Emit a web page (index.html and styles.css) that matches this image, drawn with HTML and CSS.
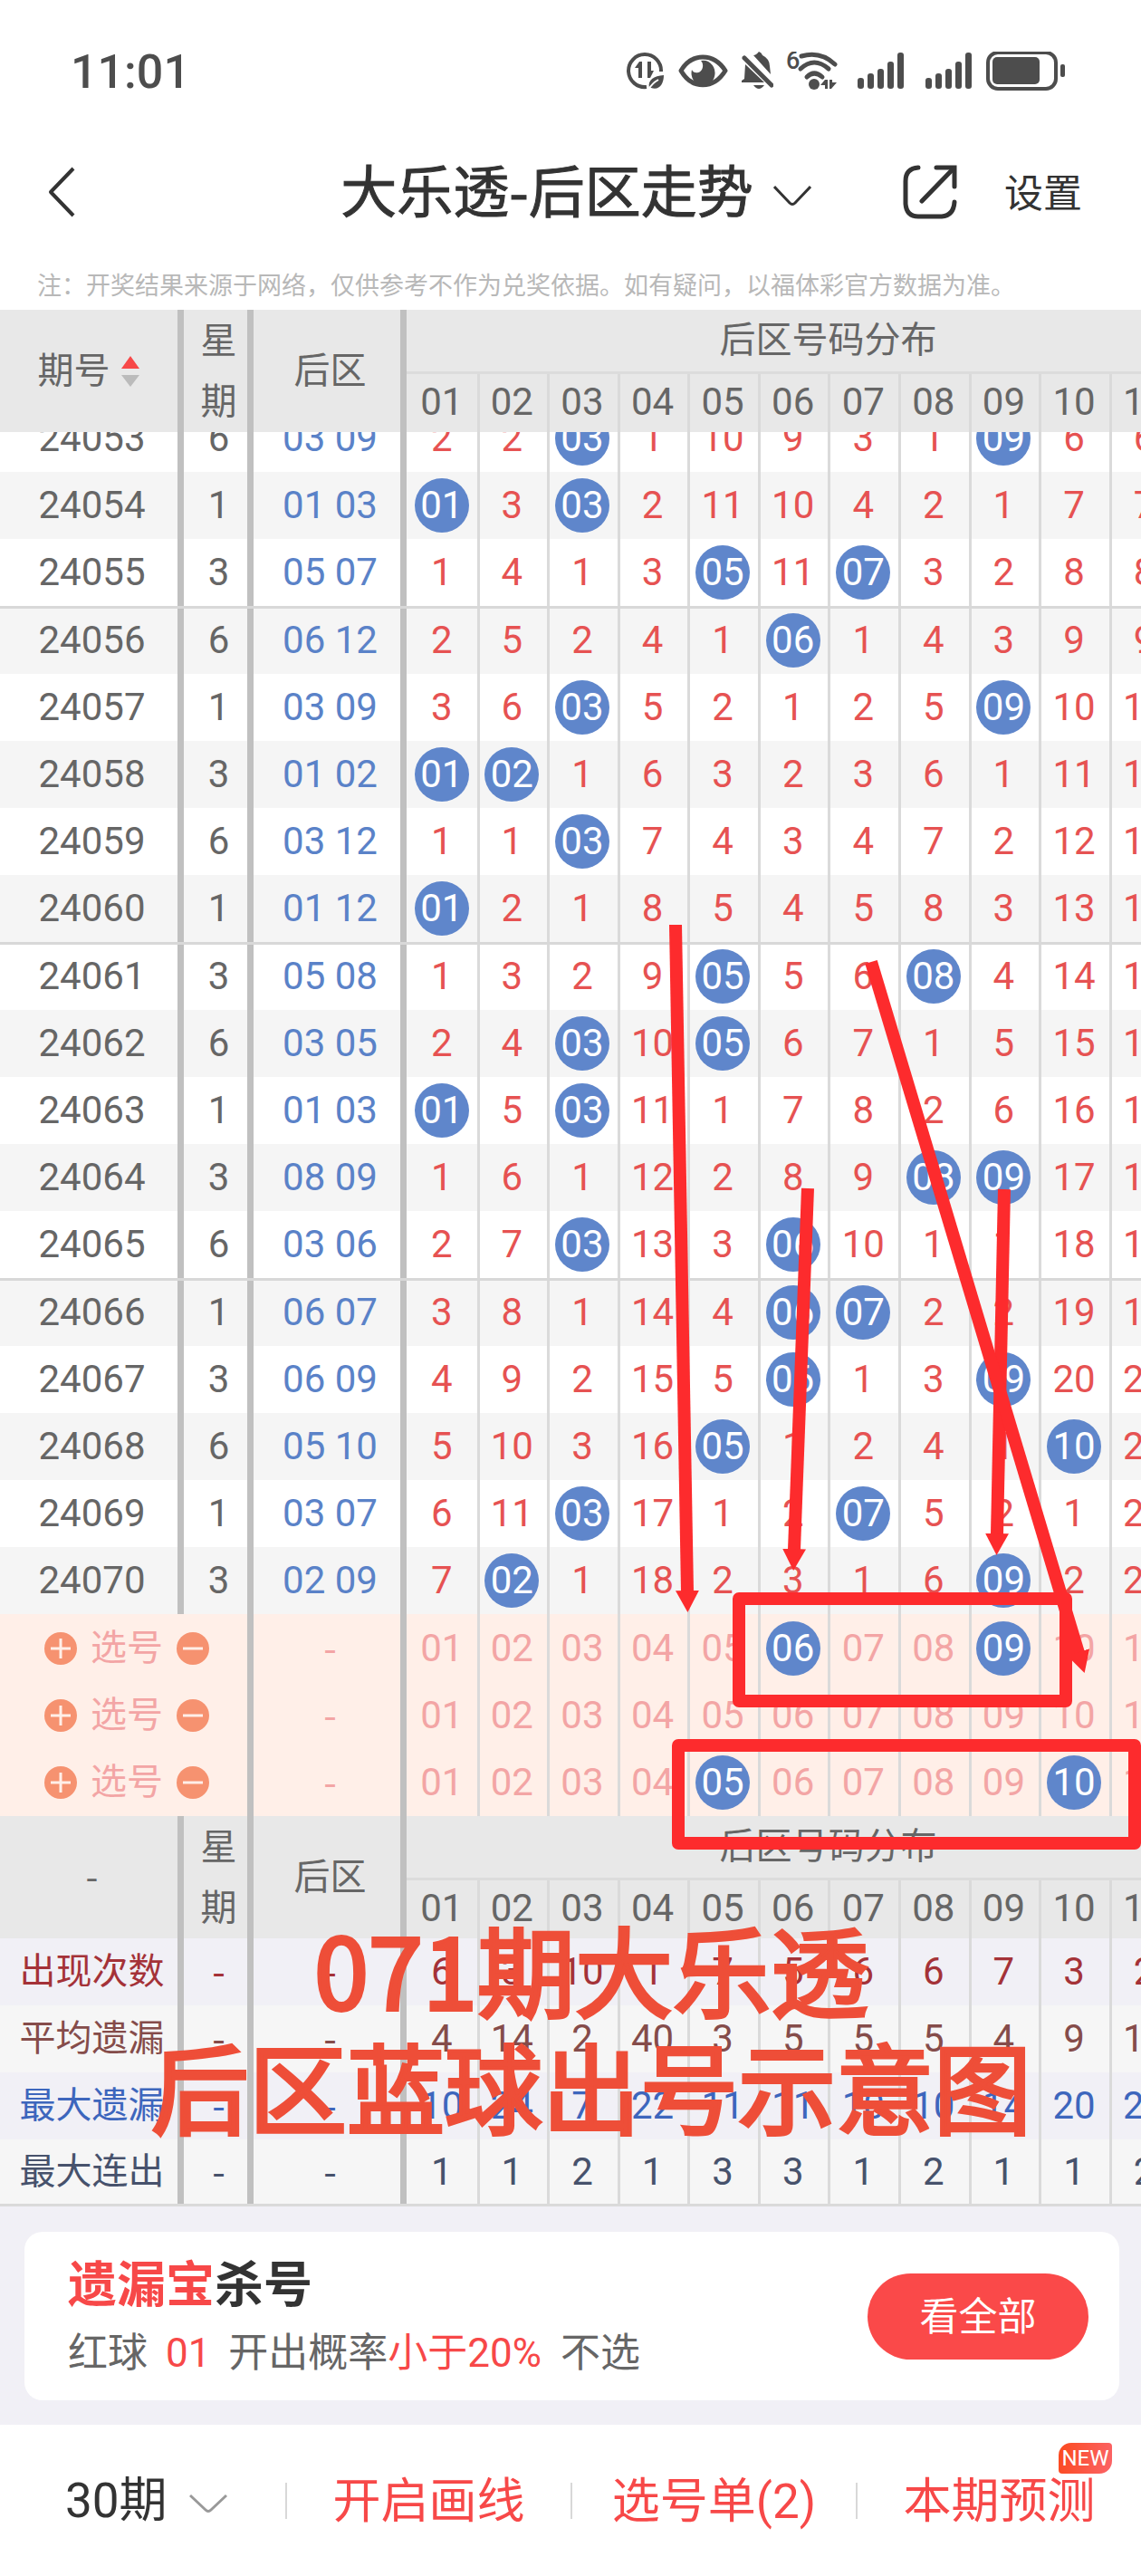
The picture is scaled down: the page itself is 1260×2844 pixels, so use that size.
FILE: index.html
```html
<!DOCTYPE html>
<html lang="zh-CN">

<head>
    <meta charset="UTF-8">
    <meta name="viewport" content="width=device-width, initial-scale=1.0">
    <title>大乐透-后区走势</title>
    <link rel="stylesheet" href="styles.css">
</head>

<body>
    <!-- Status bar -->
    <div class="status-bar">
        <div class="clock">11:01</div>
        <div class="status-icons">
            <svg width="43" height="44" viewBox="0 0 43 44" fill="none" stroke="#4d4d4d" stroke-width="4">
                <path d="M22 39 A18 18 0 1 1 38 22" />
                <path d="M9 18 L14 11 H17 V29 H13 V18 Z M23 11 H27 V21 H30 L26 29 H23 Z" fill="#4d4d4d" stroke="none" />
                <path d="M25 40 C23 31 30 27 41 26 C41 36 36 43 27 40 Z" fill="#4d4d4d" stroke="none" />
                <path d="M24 42 Q28 35 35 31" stroke="#fff" stroke-width="2" />
            </svg>
            <svg width="56" height="44" viewBox="0 0 56 44">
                <path d="M3 21 C15 1 39 1 52 21 C39 42 15 42 3 21 Z" fill="none" stroke="#4d4d4d" stroke-width="5" stroke-linejoin="round" />
                <path d="M15 20 A13 14 0 1 0 25 10 C29 14 27 22 22 23 Q17 24 15 20 Z" fill="#4d4d4d" />
            </svg>
            <svg width="35" height="44" viewBox="0 0 35 44">
                <path d="M13 4 Q16 4 19 0 Q22 1 23 4 Q31 8 31 16 L32 25 Z M4 14 L25 34 H0 V32 L3 30 Z" fill="#4d4d4d" />
                <path d="M3 7 L33 37" stroke="#4d4d4d" stroke-width="5" stroke-linecap="round" />
                <path d="M13 37 H25 Q19 45 13 37 Z" fill="#4d4d4d" />
            </svg>
            <svg width="65" height="44" viewBox="0 0 65 44" fill="none" stroke="#4d4d4d" stroke-width="5" stroke-linecap="round">
                <text x="0" y="19" class="wifi-gen">6</text>
                <path d="M17 5 Q38 -1 54 14" />
                <path d="M16 19 Q31 5 47 19" />
                <path d="M23 28 Q31 20 40 28" />
                <circle cx="31" cy="36" r="6" fill="#4d4d4d" stroke="none" />
                <path d="M38 37 L43 31 H46 V41 H43 V37 Z M48 31 H51 V34 H56 L50 41 H48 Z" fill="#4d4d4d" stroke="none" />
            </svg>
            <svg width="61" height="44" viewBox="0 0 61 44" fill="#4d4d4d">
                <rect x="0" y="29" width="7" height="12" rx="3" />
                <rect x="11" y="24" width="7" height="17" rx="3" />
                <rect x="22" y="19" width="7" height="22" rx="3" />
                <rect x="33" y="11" width="7" height="30" rx="3" />
                <rect x="44" y="1" width="7" height="40" rx="3" />
            </svg>
            <svg width="53" height="44" viewBox="0 0 53 44" fill="#4d4d4d">
                <rect x="0" y="29" width="7" height="12" rx="3" />
                <rect x="11" y="24" width="7" height="17" rx="3" />
                <rect x="22" y="19" width="7" height="22" rx="3" />
                <rect x="33" y="11" width="7" height="30" rx="3" />
                <rect x="44" y="1" width="7" height="40" rx="3" />
            </svg>
            <svg width="87" height="44" viewBox="0 0 87 44" fill="#4d4d4d">
                <rect x="2" y="1" width="75" height="40" rx="11" fill="none" stroke="#4d4d4d" stroke-width="4" />
                <rect x="7" y="6" width="52" height="30" rx="5" />
                <rect x="82" y="14" width="5" height="14" rx="2" />
            </svg>
        </div>
    </div>

    <!-- Navigation -->
    <header class="nav">
        <button class="back" aria-label="返回">
            <svg width="30" height="56" viewBox="0 0 30 56" fill="none" stroke="#333" stroke-width="4">
                <path d="M28 2 L3 28 L28 54" stroke-linejoin="round" />
            </svg>
        </button>
        <h1>
            <button class="title"><span>大乐透-后区走势</span>
                <svg width="42" height="24" viewBox="0 0 42 24" fill="none" stroke="#333" stroke-width="3">
                    <path d="M1 2 L18 20 Q21 23 24 20 L41 2" />
                </svg>
            </button>
        </h1>
        <div class="nav-actions">
            <button aria-label="分享">
                <svg width="60" height="60" viewBox="0 0 60 60" fill="none" stroke="#333" stroke-width="5" stroke-linecap="round">
                    <path d="M17 3 Q3 4 3 18 V43 Q4 57 17 57 H43 Q56 56 57 41" />
                    <path d="M37 3 H57 V24" />
                    <path d="M56 4 L21 40" />
                </svg>
            </button>
            <button class="settings">设置</button>
        </div>
    </header>
    <p class="note">注：开奖结果来源于网络，仅供参考不作为兑奖依据。如有疑问，以福体彩官方数据为准。</p>

    <!-- Trend chart -->
    <main class="chart">
        <table class="trend">
            <colgroup>
                <col class="col-issue">
                <col class="col-week">
                <col class="col-back">
                <col span="12">
            </colgroup>
            <thead class="head">
                <tr>
                    <th rowspan="2" class="thick">
                        <span class="sort">期号
                            <svg width="20" height="34" viewBox="0 0 20 34">
                                <path d="M10 0 L20 14 H0 Z" fill="#f74848" />
                                <path d="M0 21 H20 L10 34 Z" fill="#bbb" />
                            </svg>
                        </span>
                    </th>
                    <th rowspan="2" class="thick week">星<br>期</th>
                    <th rowspan="2" class="thick">后区</th>
                    <th colspan="12" class="group-name">后区号码分布</th>
                </tr>
                <tr class="numbers"></tr>
            </thead>
        </table>

        <div class="scroll">
            <table class="trend">
                <colgroup>
                    <col class="col-issue">
                    <col class="col-week">
                    <col class="col-back">
                    <col span="12">
                </colgroup>
                <tbody id="draws"></tbody>
                <tbody id="picks"></tbody>
                <tbody class="head">
                    <tr>
                        <th rowspan="2" class="thick dash">-</th>
                        <th rowspan="2" class="thick week">星<br>期</th>
                        <th rowspan="2" class="thick">后区</th>
                        <th colspan="12" class="group-name">后区号码分布</th>
                    </tr>
                    <tr class="numbers"></tr>
                </tbody>
                <tbody id="summary"></tbody>
            </table>
        </div>

        <!-- Hand-drawn marks over the chart -->
        <svg class="marks" width="1260" height="1720" viewBox="0 342 1260 1720" fill="none" stroke="#fd2b2d" stroke-width="14">
            <defs>
                <marker id="arrow" markerUnits="userSpaceOnUse" markerWidth="26" markerHeight="28" refX="1" refY="13" orient="auto">
                    <path d="M0 0 L24 13 L0 26 Z" fill="#fd2b2d" stroke="none" />
                </marker>
            </defs>
            <path d="M746 1021 L759 1757" marker-end="url(#arrow)" />
            <path d="M892 1312 L877 1711" marker-end="url(#arrow)" />
            <path d="M1109 1313 L1101 1694" marker-end="url(#arrow)" />
            <path d="M962 1062 L1191 1825" marker-end="url(#arrow)" />
            <rect x="816" y="1765" width="361" height="113" stroke-linejoin="round" />
            <rect x="749" y="1927" width="504" height="108" stroke-linejoin="round" />
        </svg>
        <div class="caption">071期大乐透<br>后区蓝球出号示意图</div>
    </main>

    <!-- Promo card -->
    <section class="promo">
        <div class="card">
            <div class="card-text">
                <h2><em>遗漏宝</em>杀号</h2>
                <p>红球 <em class="ball-no">01</em> 开出概率<em>小于20%</em> <span class="action">不选</span></p>
            </div>
            <button class="view-all">看全部</button>
        </div>
    </section>

    <!-- Bottom toolbar -->
    <nav class="toolbar">
        <div class="tool period">
            <select aria-label="期数">
                <option>30期</option>
            </select>
            <svg width="42" height="22" viewBox="0 0 42 22" fill="none" stroke="#999" stroke-width="3">
                <path d="M1 2 L18 18 Q21 21 24 18 L41 2" />
            </svg>
        </div>
        <div class="tool"><button>开启画线</button></div>
        <div class="tool"><button>选号单(2)</button></div>
        <div class="tool"><button>本期预测<span class="badge">NEW</span></button></div>
    </nav>

    <script src="script.js"></script>
</body>

</html>
```

FILE: styles.css
```css
* {
    box-sizing: border-box;
}

body {
    margin: 0;
    font-family: Roboto, "Noto Sans CJK SC", sans-serif;
    color: #333;
    background-color: #fff;
    overflow-x: hidden;
}

button,
select {
    font: inherit;
    color: inherit;
    background: none;
    border: 0;
    padding: 0;
}

h1,
h2,
p {
    margin: 0;
    font-weight: 400;
}

em {
    font-style: normal;
    color: #f74848;
}

svg {
    display: block;
    flex: none;
}

/* Status bar */
.status-bar {
    display: flex;
    align-items: center;
    justify-content: space-between;
    height: 158px;
    padding: 0 84px 0 78px;
}

.clock {
    font-size: 52px;
    font-weight: 500;
    color: #4d4d4d;
}

.status-icons {
    display: flex;
    gap: 14px;
}

.wifi-gen {
    font-size: 27px;
    font-weight: 500;
    fill: #4d4d4d;
    stroke: none;
}

/* Navigation */
.nav {
    display: grid;
    grid-template-columns: 1fr auto 1fr;
    align-items: center;
    height: 108px;
    padding: 0 32px 0 44px;
}

.back {
    justify-self: start;
    padding: 0 9px;
}

.title {
    display: flex;
    align-items: center;
    gap: 22px;
    font-family: "Noto Sans CJK SC", sans-serif;
    font-size: 62px;
    line-height: 80px;
    -webkit-text-stroke: 1px #333;
}

.title span {
    padding-bottom: 8px;
}

.title svg {
    margin-top: 8px;
}

.nav-actions {
    display: flex;
    align-items: center;
    justify-content: flex-end;
    gap: 52px;
    padding-right: 33px;
    font-size: 43px;
}

.settings {
    padding-bottom: 4px;
}

.note {
    padding: 28px 41px 4px;
    font-size: 27px;
    line-height: 44px;
    color: #b8b8b8;
    white-space: nowrap;
}

/* Trend chart */
.chart {
    position: relative;
    overflow: hidden;
}

.trend {
    width: 1380px;
    table-layout: fixed;
    border-collapse: separate;
    border-spacing: 0;
    font-size: 42px;
    line-height: 60px;
    text-align: center;
    color: #666;
}

.col-issue {
    width: 203px;
}

.col-week {
    width: 77px;
}

.col-back {
    width: 169px;
}

.trend th {
    font-weight: 400;
    padding: 0;
}

.trend td {
    height: 74px;
    padding: 0;
}

.trend .thick {
    box-shadow: inset -7px 0 #c0c0c0;
}

.num {
    box-shadow: inset 3px 0 #dadada;
}

.num.first {
    box-shadow: none;
}

.head {
    background-color: #e8e8e8;
}

.head th {
    font-size: 40px;
}

.head .group-name {
    height: 71px;
    border-bottom: 3px solid #dcdcdc;
}

.head .num {
    height: 64px;
    padding-bottom: 2px;
    font-size: 42px;
}

.head .week {
    line-height: 67px;
}

.sort {
    display: flex;
    align-items: center;
    justify-content: center;
    gap: 12px;
    padding-right: 8px;
}

.trend .dash {
    padding-bottom: 6px;
    font-family: "Noto Sans CJK SC", sans-serif;
}

.scroll {
    overflow: hidden;
}

/* list is scrolled part way into its first row */
.scroll .trend {
    margin-top: -30px;
}

#draws tr:nth-child(even) {
    background-color: #f5f5f5;
}

#draws .divide td {
    height: 75px;
    padding-bottom: 3px;
    border-top: 3px solid #d8d8d8;
}

#draws .num {
    color: #e65252;
}

#draws .back-area {
    color: #5a82c8;
}

.trend .ball {
    display: block;
    width: 60px;
    height: 60px;
    margin: 0 auto;
    border-radius: 50%;
    color: #fff;
    background-color: #5f86cb;
}

#picks {
    color: #f3a5a5;
    background-color: #ffefe8;
}

#picks tr:first-child td {
    height: 75px;
}

.pick {
    display: flex;
    align-items: center;
    justify-content: center;
    gap: 15px;
    font-size: 40px;
}

.round {
    width: 36px;
    height: 36px;
    border-radius: 50%;
    background-color: #f69270;
}

.round svg {
    margin: auto;
}

/* Summary rows */
#summary tr {
    background-color: #f6f6f6;
}

#summary tr:nth-child(odd) {
    background-color: #f1f0f6;
}

#summary .label {
    font-size: 40px;
}

#summary .count {
    color: #a43238;
}

#summary .average {
    color: #854c4a;
}

#summary .longest {
    color: #3d66bd;
}

#summary .streak {
    color: #47526c;
}

#summary tr:last-child td {
    border-bottom: 3px solid #dadada;
}

.marks {
    position: absolute;
    top: 0;
    left: 0;
}

.caption {
    position: absolute;
    bottom: 70px;
    left: 0;
    right: 0;
    padding-left: 46px;
    font-family: "Noto Sans CJK SC", sans-serif;
    font-size: 108px;
    line-height: 129px;
    text-align: center;
    white-space: nowrap;
    color: #ee4e38;
    -webkit-text-stroke: 4px #ee4e38;
}

/* Promo card */
.promo {
    padding: 28px 24px 27px 27px;
    background-color: #f1f0f6;
}

.card {
    display: flex;
    align-items: center;
    justify-content: space-between;
    height: 186px;
    padding: 0 34px 0 48px;
    border-radius: 20px;
    background-color: #fff;
}

.card-text {
    padding-top: 8px;
}

.card h2 {
    font-size: 54px;
    font-weight: 700;
    line-height: 74px;
}

.card p {
    font-size: 44px;
    line-height: 74px;
    color: #666;
}

.ball-no {
    margin: 0 9px;
}

.action {
    margin-left: 10px;
}

.view-all {
    width: 244px;
    height: 95px;
    padding-bottom: 6px;
    border-radius: 48px;
    font-size: 43px;
    color: #fff;
    background-color: #fa4949;
}

/* Bottom toolbar */
.toolbar {
    display: grid;
    grid-template-columns: repeat(4, 1fr);
    align-items: center;
    height: 167px;
    font-size: 53px;
    color: #f74848;
}

.tool {
    display: flex;
    align-items: center;
    justify-content: center;
    gap: 24px;
    height: 40px;
    border-left: 2px solid #d8d8d8;
}

.tool.period {
    padding-left: 8px;
    border-left: 0;
}

.tool.period svg {
    margin-top: 6px;
}

.tool select {
    appearance: none;
    color: #333;
}

.tool button {
    position: relative;
    padding-bottom: 8px;
}

.badge {
    position: absolute;
    top: -22px;
    right: -18px;
    padding: 0 3px;
    border-radius: 14px 4px;
    font-size: 24px;
    line-height: 34px;
    color: #fff;
    background: linear-gradient(100deg, #fb4a1e, #fb6468);
}
```

FILE: script.js
```js
const COUNT = 12;
const WEEK = ['6', '1', '3'];

const draws = [
    [24053, [3, 9]], [24054, [1, 3]], [24055, [5, 7]],
    [24056, [6, 12]], [24057, [3, 9]], [24058, [1, 2]], [24059, [3, 12]], [24060, [1, 12]],
    [24061, [5, 8]], [24062, [3, 5]], [24063, [1, 3]], [24064, [8, 9]], [24065, [3, 6]],
    [24066, [6, 7]], [24067, [6, 9]], [24068, [5, 10]], [24069, [3, 7]], [24070, [2, 9]]
];

// Misses carried over from the issues before the first one
const misses = [1, 1, 0, 0, 9, 8, 2, 0, 3, 5, 5, 3];

const picks = [[6, 9], [], [5, 10]];

const summary = [
    ['count', '出现次数', [6, 3, 10, 1, 7, 5, 6, 6, 7, 3, 2, 4]],
    ['average', '平均遗漏', [4, 14, 2, 40, 3, 5, 5, 5, 4, 9, 14, 6]],
    ['longest', '最大遗漏', [10, 24, 7, 22, 11, 11, 10, 10, 14, 20, 23, 12]],
    ['streak', '最大连出', [1, 1, 2, 1, 3, 3, 1, 2, 1, 1, 2, 2]]
];

function pad(n) {
    return String(n).padStart(2, '0');
}

function cells(tag, getContent) {
    let html = '';
    for (let n = 1; n <= COUNT; n++) {
        html += `<${tag} class="num${n === 1 ? ' first' : ''}">${getContent(n)}</${tag}>`;
    }
    return html;
}

document.querySelectorAll('.numbers').forEach(row => {
    row.innerHTML = cells('th', pad);
});

document.getElementById('draws').innerHTML = draws.map(([issue, hits], i) => {
    const row = cells('td', n => {
        if (hits.includes(n)) {
            misses[n - 1] = 0;
            return `<span class="ball">${pad(n)}</span>`;
        }
        return ++misses[n - 1];
    });
    // a line every five issues
    const divide = issue % 5 === 1 ? ' class="divide"' : '';
    return `<tr${divide}><td class="thick">${issue}</td><td class="thick">${WEEK[i % 3]}</td>` +
        `<td class="thick back-area">${hits.map(pad).join(' ')}</td>${row}</tr>`;
}).join('');

function roundButton(label, path) {
    return `<button class="round" aria-label="${label}"><svg width="24" height="24" viewBox="0 0 24 24" ` +
        `stroke="#ffefe8" stroke-width="3"><path d="${path}" /></svg></button>`;
}

document.getElementById('picks').innerHTML = picks.map(chosen =>
    `<tr><td colspan="2" class="thick"><div class="pick">${roundButton('添加', 'M1 12 H23 M12 1 V23')}` +
    `<span>选号</span>${roundButton('删除', 'M1 12 H23')}</div></td><td class="thick dash">-</td>` +
    cells('td', n => `<button${chosen.includes(n) ? ' class="ball"' : ''}>${pad(n)}</button>`) + '</tr>'
).join('');

document.getElementById('summary').innerHTML = summary.map(([name, label, values]) =>
    `<tr class="${name}"><td class="thick label">${label}</td><td class="thick dash">-</td>` +
    `<td class="thick dash">-</td>${cells('td', n => values[n - 1])}</tr>`
).join('');
```
